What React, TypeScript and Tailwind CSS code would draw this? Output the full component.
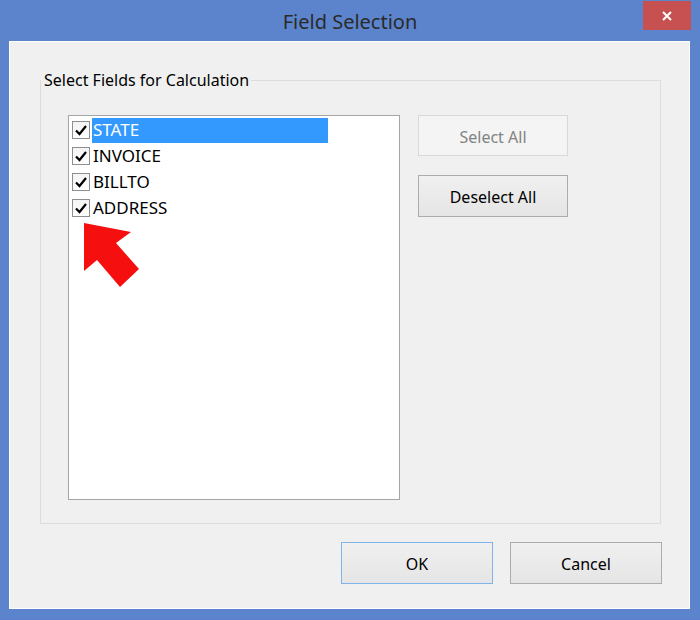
export default function App() {
  const items = ["STATE", "INVOICE", "BILLTO", "ADDRESS"];
  return (
    <div className="w-[700px] h-[620px] bg-[#5c84cc] flex flex-col font-['Noto_Sans',sans-serif] text-black">
      <div className="relative h-[41px] shrink-0 flex items-center justify-center">
        <span className="text-[20px] leading-none text-[#2a2a2a] pt-[2px]">Field Selection</span>
        <div className="absolute right-[9px] top-[1px] w-[48px] h-[29px] bg-[#c75050] flex items-center justify-center">
          <svg width="10" height="10" viewBox="0 0 10 10">
            <path d="M1 1L9 9M9 1L1 9" stroke="white" strokeWidth="2" />
          </svg>
        </div>
      </div>
      <div className="flex-1 ml-[9px] mr-[10px] mb-[11px] border border-white bg-[#f0f0f0] flex flex-col">
        <fieldset className="ml-[30px] mt-[28px] w-[621px] h-[454px] border border-[#dcdcdc] p-0 m-0 min-w-0">
          <legend className="ml-[0px] pl-[3px] pr-[2px] text-[16px] leading-[20px]">Select Fields for Calculation</legend>
          <div className="flex pl-[27px] pt-[25px]">
            <div className="relative w-[332px] h-[385px] bg-white border border-[#a5a5a5] pt-[1px]">
              {items.map((it, i) => (
                <div key={it} className="flex items-center h-[26px]">
                  <div className="ml-[3px] w-[18px] h-[18px] border border-[#8f8f8f] bg-linear-to-b from-[#f4f4f4] to-[#ffffff] flex items-center justify-center">
                    <svg width="14" height="14" viewBox="0 0 14 14">
                      <path d="M2 7.5L5.5 11L12 3" fill="none" stroke="black" strokeWidth="2.2" />
                    </svg>
                  </div>
                  <div
                    className={
                      i === 0
                        ? "ml-[2px] w-[236px] h-[25px] flex items-center bg-[#3399ff] text-white text-[17px] pl-[1px]"
                        : "ml-[2px] h-[25px] flex items-center text-[17px] pl-[1px]"
                    }
                  >
                    {it}
                  </div>
                </div>
              ))}
              <svg className="absolute left-[14px] top-[106px]" width="60" height="70" viewBox="0 0 60 70">
                <polygon points="1,1 48,10 33,21 56,47 37,65 14,38 1,49" fill="#f50f0f" />
              </svg>
            </div>
            <div className="ml-[18px] flex flex-col">
              <button className="w-[150px] h-[41px] pt-[2px] border border-[#d9d9d9] bg-[#f4f4f4] text-[#838383] text-[16px]">
                Select All
              </button>
              <button className="mt-[19px] w-[150px] h-[42px] pt-[2px] border border-[#acacac] bg-linear-to-b from-[#f0f0f0] to-[#e5e5e5] text-[16px]">
                Deselect All
              </button>
            </div>
          </div>
        </fieldset>
        <div className="flex justify-end gap-[17px] pr-[27px] mt-[18px]">
          <button className="w-[152px] h-[42px] pt-[2px] border border-[#7eb4ea] bg-linear-to-b from-[#f0f0f0] to-[#e5e5e5] text-[16px]">
            OK
          </button>
          <button className="w-[152px] h-[42px] pt-[2px] border border-[#acacac] bg-linear-to-b from-[#f0f0f0] to-[#e5e5e5] text-[16px]">
            Cancel
          </button>
        </div>
      </div>
    </div>
  );
}
